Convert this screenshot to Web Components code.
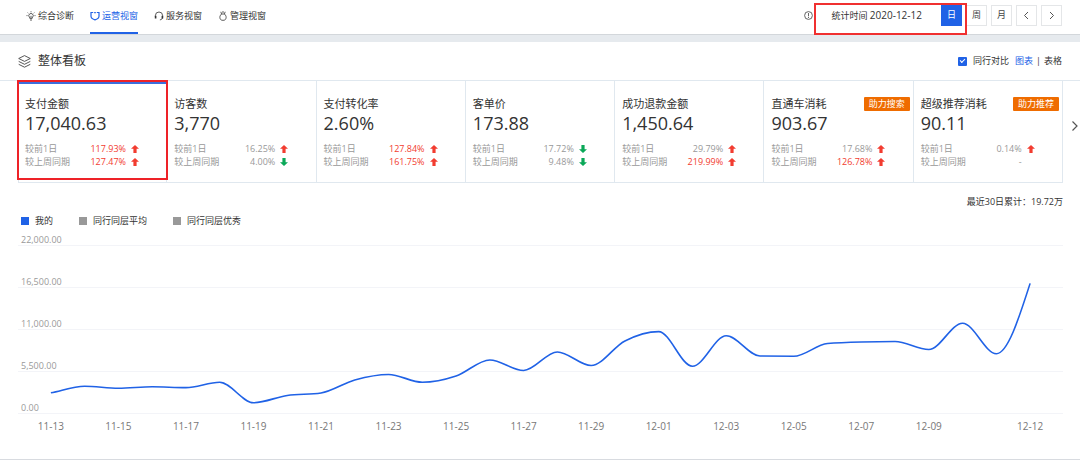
<!DOCTYPE html>
<html lang="zh-CN">
<head>
<meta charset="utf-8">
<title>运营视窗</title>
<style>
  body {
    margin: 0;
    background: #fff;
    color: #333;
    font: 9px/12px "Open Sans", "Noto Sans CJK SC", sans-serif;
    --blue: #2062e6;
    --line: #e0e8ef;
    --mute: #999;
    --red: #f23c30;
    --green: #0aa858;
  }
</style>
</head>
<body>
<top-bar>
  <nav-tab icon="bulb">综合诊断</nav-tab>
  <nav-tab icon="shield" active>运营视窗</nav-tab>
  <nav-tab icon="headset">服务视窗</nav-tab>
  <nav-tab icon="badge">管理视窗</nav-tab>
  <date-picker slot="end"></date-picker>
</top-bar>
<board-panel heading="整体看板">
  <metric-strip>
    <metric-card active label="支付金额" value="17,040.63" day="117.93%" day-dir="up" week="127.47%" week-dir="up"></metric-card>
    <metric-card label="访客数" value="3,770" day="16.25%" day-dir="up" week="4.00%" week-dir="down"></metric-card>
    <metric-card label="支付转化率" value="2.60%" day="127.84%" day-dir="up" week="161.75%" week-dir="up"></metric-card>
    <metric-card label="客单价" value="173.88" day="17.72%" day-dir="down" week="9.48%" week-dir="down"></metric-card>
    <metric-card label="成功退款金额" value="1,450.64" day="29.79%" day-dir="up" week="219.99%" week-dir="up"></metric-card>
    <metric-card label="直通车消耗" value="903.67" day="17.68%" day-dir="up" week="126.78%" week-dir="up" promo="助力搜索"></metric-card>
    <metric-card label="超级推荐消耗" value="90.11" day="0.14%" day-dir="up" week="-" promo="助力推荐"></metric-card>
  </metric-strip>
  <trend-chart>最近30日累计：19.72万</trend-chart>
</board-panel>

<script>
const define = (name, render, ready) => customElements.define(name, class extends HTMLElement {
  constructor() {
    super();
    this.attachShadow({ mode: 'open' });
  }
  connectedCallback() {
    this.shadowRoot.innerHTML = render(this);
    if (ready) ready(this.shadowRoot);
  }
});

const icons = {
  bulb: '<path d="M3.4 6.2a2.200 2.200 0 1 1 3.200 0L6.200 7.400H3.800zM4 9h2M5 7V4.800M5 .3v1M1.700 1.600l.7.7M8.300 1.600l-.7.7M.5 4.600h1M8.500 4.600h1"/>',
  shield: '<path d="M3.200 1.500H1v3.800c0 1.900 1.600 2.800 4 3.600 2.400-.8 4-1.700 4-3.600V1.500H6.800" stroke-width="1.200"/><path d="M4.200 1.600h1.600" stroke-width="1.400"/>',
  headset: '<path d="M1.400 6V4.600a3.600 3.600 0 0 1 7.200 0v1.600c0 1.500-1 2.500-2.700 2.700"/><path d="M1.600 4.800v2.600M8.400 4.800v2.600" stroke-width="1.600"/>',
  badge: '<path d="M2.800.8 3.600 3M7.200.8 6.400 3M3.600 3h2.800C8.200 4.600 8.400 6 7.900 7.600 7.500 8.800 6.600 9.300 5 9.300S2.500 8.800 2.100 7.600C1.600 6 1.800 4.600 3.600 3zM4 1h2"/>'
};

define('nav-tab', el => `
  <style>
    :host { display: block; }
    a { display: flex; align-items: center; gap: 2px; height: 34px; box-sizing: border-box; padding-bottom: 1px;
        border-bottom: 2px solid transparent; color: inherit; text-decoration: none; white-space: nowrap; }
    :host([active]) a { color: var(--blue); border-color: var(--blue); }
    svg { width: 10px; height: 10px; fill: none; stroke: currentColor; stroke-width: .8; }
  </style>
  <a href="#"><svg viewBox="0 0 10 10" aria-hidden="true">${icons[el.getAttribute('icon')]}</svg><slot></slot></a>`);

define('top-bar', () => `
  <style>
    :host { display: block; }
    header { display: flex; justify-content: space-between; padding: 0 18px 0 26px; height: 34px; }
    nav { display: flex; gap: 16px; }
    .edge { height: 8px; box-sizing: border-box; background: #e6eaee; border-top: 1px solid #d3d7db; }
  </style>
  <header><nav><slot></slot></nav><slot name="end"></slot></header>
  <div class="edge"></div>`);

define('date-picker', () => `
  <style>
    :host { display: flex; align-items: center; height: 30px; }
    .info { width: 9px; height: 9px; fill: none; stroke: #555; stroke-width: .9; margin-right: 18px; }
    .range { position: relative; display: flex; align-items: center; }
    .range::after { content: ""; position: absolute; inset: -2px -5px -9px -17px; border: 2px solid #f03030; pointer-events: none; }
    time { margin-right: 19px; white-space: nowrap; }
    .num { font-size: 10px; }
    button { width: 21px; height: 21px; padding: 0; border: 1px solid #e4e6e8; background: #fff; color: #444;
             font: inherit; display: grid; place-items: center; }
    button.on { background: var(--blue); border-color: var(--blue); color: #fff; }
    .set { display: flex; gap: 4px; margin-left: 4px; }
    button svg { width: 9px; height: 9px; fill: none; stroke: #555; }
  </style>
  <svg class="info" viewBox="0 0 9 9" aria-hidden="true"><circle cx="4.5" cy="4.5" r="3.9"/><path d="M4.5 2v3.300M4.500 6v1"/></svg>
  <div class="range"><time datetime="2020-12-12">统计时间 <span class="num">2020-12-12</span></time><button class="on">日</button></div>
  <div class="set">
    <button>周</button><button>月</button>
    <button aria-label="上一天"><svg viewBox="0 0 9 9"><path d="M6 1 2.500 4.500 6 8"/></svg></button>
    <button aria-label="下一天"><svg viewBox="0 0 9 9"><path d="M3 1l3.500 3.500L3 8"/></svg></button>
  </div>`);

define('board-panel', el => `
  <style>
    :host { display: block; border-bottom: 1px solid #d8dbe0; padding-bottom: 26px; }
    header { display: flex; align-items: center; height: 38px; padding: 0 18px; border-bottom: 1px solid var(--line); }
    h2 { flex: 1; margin: 0 0 0 7px; font-size: 12px; line-height: 16px; font-weight: 400; }
    .stack { width: 13px; height: 13px; fill: none; stroke: #444; stroke-width: .9; stroke-linejoin: round; }
    label { display: flex; align-items: center; gap: 6px; margin-right: 6px; }
    input { appearance: none; width: 9px; height: 9px; margin: 0; border-radius: 1px; background: var(--blue);
            display: grid; place-items: center; }
    input:checked::before { content: ""; width: 4px; height: 2px; border: solid #fff; border-width: 0 0 1px 1px; transform: rotate(-45deg) translate(1px, -1px); }
    .views { display: flex; gap: 3px; }
    a { color: inherit; text-decoration: none; }
    a.on { color: var(--blue); }
  </style>
  <header>
    <svg class="stack" viewBox="0 0 13 13" aria-hidden="true"><path d="M6.500.6 12.300 3.500 6.500 6.400.7 3.500zM.7 6.400l5.800 2.900 5.800-2.900M.7 9.300l5.800 2.900 5.800-2.900"/></svg>
    <h2>${el.getAttribute('heading')}</h2>
    <label><input type="checkbox" checked>同行对比</label>
    <div class="views"><a class="on" href="#">图表</a><span>|</span><a href="#">表格</a></div>
  </header>
  <slot></slot>`);

define('metric-strip', () => `
  <style>
    :host { display: grid; grid-template-columns: 18px 1fr 17px; align-items: center; }
    .cards { grid-column: 2; display: grid; grid-template-columns: repeat(7, 1fr); border-bottom: 1px solid var(--line); }
    button { width: 17px; height: 24px; margin-top: -12px; padding: 0; border: 0; background: none; display: grid; place-items: center; }
    svg { width: 12px; height: 12px; margin-left: 6px; fill: none; stroke: #555; stroke-width: 1.2; }
  </style>
  <div class="cards"><slot></slot></div>
  <button aria-label="更多指标"><svg viewBox="0 0 12 12"><path d="M3.500 1.500 8 6l-4.500 4.500"/></svg></button>`);

const arrow = dir => !dir ? '' : `<svg class="${dir}" viewBox="0 0 8 8" aria-hidden="true"><path d="${dir === 'up'
  ? 'M4 0 8 3.800H5.600V8H2.400V3.800H0z' : 'M4 8 0 4.200h2.400V0h3.200v4.200H8z'}"/></svg>`;
const compare = (name, text, dir) => `<dt>${name}</dt>
  <dd class="${parseFloat(text) >= 100 ? 'big' : ''}">${text}</dd><dd class="dir">${arrow(dir)}</dd>`;

define('metric-card', el => {
  const a = n => el.getAttribute(n);
  return `
  <style>
    :host { display: block; position: relative; min-width: 0; border-right: 1px solid var(--line); padding: 15px 0 14px 7px; }
    :host(:first-child) { border-left: 1px solid var(--line); padding-left: 6px; }
    :host([active]) { box-shadow: inset 0 3px #3c6edc; }
    :host([active])::after { content: ""; position: absolute; inset: -1px -2px 2px -2px; border: 2px solid #ee2228; pointer-events: none; }
    .head { display: flex; justify-content: space-between; align-items: center; height: 16px; padding-right: 3px; white-space: nowrap; }
    h3 { margin: 0; font-size: 11px; line-height: 16px; font-weight: 400; }
    .promo { padding: 1px 5px; border-radius: 1px; background: #ef6c00; color: #fff; line-height: 12px; }
    .value { font-size: 18px; line-height: 22px; }
    dl { display: grid; grid-template-columns: 50px 51px 13px; margin: 8px 0 0; line-height: 13px; color: var(--mute); white-space: nowrap; }
    dd { margin: 0; text-align: right; }
    .big { color: var(--red); }
    .dir { display: flex; align-items: center; justify-content: flex-end; }
    svg { width: 8px; height: 8px; }
    .up { fill: var(--red); }
    .down { fill: var(--green); }
  </style>
  <div class="head"><h3>${a('label')}</h3>${a('promo') ? `<span class="promo">${a('promo')}</span>` : ''}</div>
  <div class="value">${a('value')}</div>
  <dl>${compare('较前1日', a('day'), a('day-dir'))}${compare('较上周同期', a('week'), a('week-dir'))}</dl>`;
});

const sales = [2710, 3560, 3310, 3500, 3390, 4090, 1410, 2360, 2690, 4390, 5110, 4090, 4910, 7010, 5630,
  8060, 6290, 9500, 10720, 6180, 10180, 7530, 7490, 9170, 9370, 9420, 8380, 11820, 7830, 17040.63];
const dates = sales.map((_, i) => {
  const d = new Date(Date.UTC(2020, 10, 13 + i));
  return d.toISOString().slice(5, 10);
});

// Monotone cubic curve through evenly spaced points, so the line never overshoots a day's value.
function curve(points) {
  const n = points.length, h = points[1][0] - points[0][0];
  const s = points.slice(1).map((p, i) => (p[1] - points[i][1]) / h);
  const m = points.map((_, i) => {
    if (i === 0) return s[0];
    if (i === n - 1) return 1.5 * s[n - 2];
    if (s[i - 1] * s[i] <= 0) return 0;
    return Math.sign(s[i]) * Math.min(Math.abs(s[i - 1]), Math.abs(s[i]), Math.abs(s[i - 1] + s[i]) / 4) * 2;
  });
  return points.reduce((d, p, i) => {
    if (!i) return `M${p}`;
    const q = points[i - 1];
    return `${d}C${q[0] + h / 3},${q[1] + m[i - 1] * h / 3} ${p[0] - h / 3},${p[1] - m[i] * h / 3} ${p}`;
  }, '');
}

define('trend-chart', () => `
  <style>
    :host { display: block; padding: 12px 17px 0 18px; }
    .total { text-align: right; line-height: 13px; }
    ul { display: flex; gap: 26px; list-style: none; margin: 6px 0 0; padding: 0 0 0 3px; line-height: 14px; }
    li { display: flex; align-items: center; gap: 6px; }
    li::before { content: ""; width: 8px; height: 8px; background: var(--mute); }
    li:first-child::before { background: var(--blue); }
    .plot { display: grid; }
    .plot > * { grid-area: 1 / 1; }
    .scale { display: grid; grid-template-rows: 18px repeat(4, 42px); color: var(--mute); line-height: 10px; }
    .scale div { display: flex; align-items: flex-end; padding-left: 3px; border-bottom: 1px solid #f3f4f8; }
    .line { margin: 0 16px; }
    svg { display: block; width: 100%; height: 186px; fill: none; stroke: var(--blue); stroke-width: 1.6; }
    .days { display: grid; grid-template-columns: repeat(30, 1fr); padding: 5px 16px 0; font-size: 10px; line-height: 14px; color: #777; }
    .days span { min-width: 0; display: flex; justify-content: center; white-space: nowrap; }
  </style>
  <div class="total"><slot></slot></div>
  <ul><li>我的</li><li>同行同层平均</li><li>同行同层优秀</li></ul>
  <div class="plot">
    <div class="scale">${['22,000.00', '16,500.00', '11,000.00', '5,500.00', '0.00'].map(t => `<div>${t}</div>`).join('')}</div>
    <div class="line"><svg viewBox="0 0 30 186" preserveAspectRatio="none" role="img" aria-label="我的支付金额"><path vector-effect="non-scaling-stroke"/></svg></div>
  </div>
  <div class="days">${dates.map((d, i) => `<span>${(i % 2 === 0 && i < 28) || i === 29 ? d : ''}</span>`).join('')}</div>`,
  root => root.querySelector('path').setAttribute('d',
    curve(sales.map((v, i) => [i + 0.5, 185.5 - v / 22000 * 168]))));
</script>
</body>
</html>
